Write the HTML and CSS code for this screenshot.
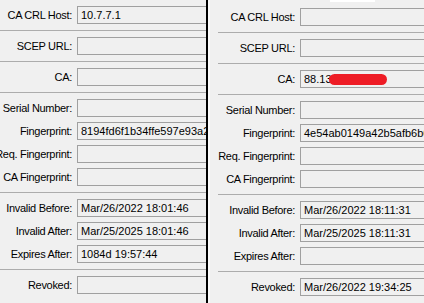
FILE: index.html
```html
<!DOCTYPE html>
<html lang="en">

<head>
    <meta charset="UTF-8">
    <meta name="viewport" content="width=device-width, initial-scale=1.0">
    <title>Certificates</title>
    <link rel="stylesheet" href="styles.css">
</head>

<body>
    <div class="screen">
        <!-- first certificate -->
        <div class="panel panel-left">
            <div class="form">
                <div class="section">
                    <div class="row"><label>CA CRL Host:</label><div class="field">10.7.7.1</div></div>
                </div>
                <div class="section">
                    <div class="row"><label>SCEP URL:</label><div class="field"></div></div>
                </div>
                <div class="section">
                    <div class="row"><label>CA:</label><div class="field"></div></div>
                </div>
                <div class="section">
                    <div class="row"><label>Serial Number:</label><div class="field"></div></div>
                    <div class="row"><label>Fingerprint:</label><div class="field">8194fd6f1b34ffe597e93a2c</div></div>
                    <div class="row"><label>Req. Fingerprint:</label><div class="field"></div></div>
                    <div class="row"><label>CA Fingerprint:</label><div class="field"></div></div>
                </div>
                <div class="section">
                    <div class="row"><label>Invalid Before:</label><div class="field">Mar/26/2022 18:01:46</div></div>
                    <div class="row"><label>Invalid After:</label><div class="field">Mar/25/2025 18:01:46</div></div>
                    <div class="row"><label>Expires After:</label><div class="field">1084d 19:57:44</div></div>
                </div>
                <div class="section">
                    <div class="row"><label>Revoked:</label><div class="field"></div></div>
                </div>
            </div>
        </div>

        <div class="divider"></div>

        <!-- second certificate -->
        <div class="panel panel-right">
            <div class="top-edge"><span class="tab-edge"></span></div>
            <div class="form">
                <div class="section">
                    <div class="row"><label>CA CRL Host:</label><div class="field"></div></div>
                </div>
                <div class="section">
                    <div class="row"><label>SCEP URL:</label><div class="field"></div></div>
                </div>
                <div class="section">
                    <div class="row"><label>CA:</label><div class="field">88.13<span class="scribble"></span></div></div>
                </div>
                <div class="section">
                    <div class="row"><label>Serial Number:</label><div class="field"></div></div>
                    <div class="row"><label>Fingerprint:</label><div class="field">4e54ab0149a42b5afb6b6e</div></div>
                    <div class="row"><label>Req. Fingerprint:</label><div class="field"></div></div>
                    <div class="row"><label>CA Fingerprint:</label><div class="field"></div></div>
                </div>
                <div class="section">
                    <div class="row"><label>Invalid Before:</label><div class="field">Mar/26/2022 18:11:31</div></div>
                    <div class="row"><label>Invalid After:</label><div class="field">Mar/25/2025 18:11:31</div></div>
                    <div class="row"><label>Expires After:</label><div class="field"></div></div>
                </div>
                <div class="section">
                    <div class="row"><label>Revoked:</label><div class="field">Mar/26/2022 19:34:25</div></div>
                </div>
            </div>
        </div>
    </div>
</body>

</html>
```

FILE: styles.css
```css
body,
html {
    margin: 0;
    padding: 0;
    width: 100%;
    height: 100%;
    overflow: hidden;
    background-color: #f0f0f0;
    font-family: "Liberation Sans", Arial, sans-serif;
    font-size: 11px;
    color: #000;
}

.screen {
    display: flex;
    height: 303px;
}

.panel {
    overflow: hidden;
    background-color: #f0f0f0;
}

.panel-left {
    width: 206px;
}

.panel-left .form {
    margin-left: -13px;
}

.divider {
    width: 2px;
    background-color: #000;
}

.panel-right {
    width: 214px;
    border-left: 2px solid #fafafa;
}

.top-edge {
    height: 2px;
}

.tab-edge {
    display: block;
    margin-left: 120px;
    width: 45px;
    height: 2px;
    background-color: #fff;
}

.section {
    display: flex;
    flex-direction: column;
    gap: 5px;
    padding: 6px 0;
    border-bottom: 1px solid #acacac;
    margin-left: 8px;
}

.section:last-child {
    border-bottom: none;
}

.row {
    display: flex;
    align-items: center;
    margin-left: -8px;
}

.row label {
    width: 85px;
    flex: none;
    text-align: right;
    padding-right: 5px;
    white-space: nowrap;
    line-height: 18px;
    letter-spacing: -0.3px;
}

.field {
    flex: none;
    width: 240px;
    height: 16px;
    line-height: 16px;
    border: 1px solid #a0a0a0;
    padding-left: 3px;
    white-space: nowrap;
    overflow: hidden;
}

.scribble {
    display: inline-block;
    vertical-align: -2px;
    margin-left: -3px;
    width: 58px;
    height: 11px;
    border-radius: 6px;
    background-color: #ee1c25;
}
```
